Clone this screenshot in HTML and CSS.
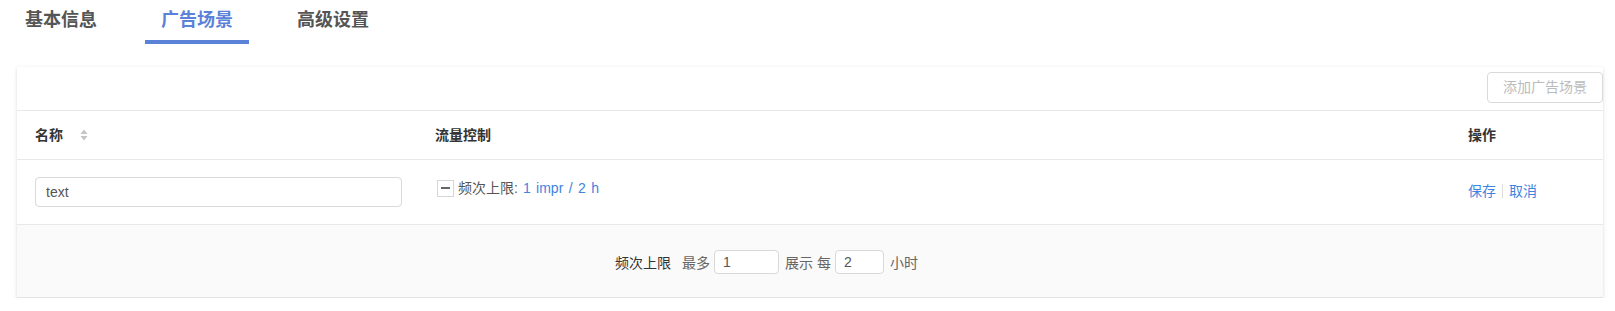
FILE: index.html
```html
<!DOCTYPE html>
<html lang="zh-CN">
<head>
<meta charset="utf-8">
<title>广告场景</title>
<link rel="stylesheet" href="styles.css">
</head>
<body>
  <nav class="tabs">
    <div class="tab">基本信息</div>
    <div class="tab active">广告场景</div>
    <div class="tab">高级设置</div>
  </nav>

  <section class="card">
    <div class="toolbar">
      <button class="btn-add" disabled>添加广告场景</button>
    </div>

    <div class="table">
      <div class="row head">
        <div class="cell c1">名称
          <svg class="sort" width="8" height="14" viewBox="0 0 8 14"><path d="M0.5 6 L4 1.5 L7.5 6 Z" fill="#c4c4c4"/><path d="M0.5 8 L4 12.5 L7.5 8 Z" fill="#c4c4c4"/></svg>
        </div>
        <div class="cell c2">流量控制</div>
        <div class="cell c3">操作</div>
      </div>

      <div class="row body">
        <div class="cell c1"><input class="name-input" type="text" value="text"></div>
        <div class="cell c2">
          <span class="collapse"><span class="dash"></span></span>
          <span class="freq-label">频次上限:</span>
          <span class="link spaced">1 impr / 2 h</span>
        </div>
        <div class="cell c3">
          <span class="link">保存</span><span class="sep"></span><span class="link">取消</span>
        </div>
      </div>

      <div class="expand">
        <span class="exp-label">频次上限</span>
        <span class="muted">最多</span>
        <input class="num w1" type="text" value="1">
        <span class="muted gap-l">展示 每</span>
        <input class="num w2" type="text" value="2">
        <span class="muted gap-l">小时</span>
      </div>
    </div>
  </section>
</body>
</html>
```

FILE: styles.css
```css
html, body {
  margin: 0;
  padding: 0;
  background: #ffffff;
}

body {
  font-family: "Liberation Sans", "Noto Sans CJK SC", sans-serif;
  font-size: 14px;
  color: #333;
}

.tabs {
  display: flex;
  gap: 32px;
  padding-left: 9px;
  height: 44px;
}

.tab {
  padding: 0 16px;
  height: 40px;
  line-height: 40px;
  font-size: 18px;
  font-weight: 600;
  color: #555;
  border-bottom: 4px solid transparent;
}

.tab.active {
  color: #5a82d8;
  border-bottom-color: #5a82d8;
}

.card {
  margin: 23px 12px 0 17px;
  background: #fff;
  box-shadow: 0 1px 3px rgba(0, 0, 0, 0.12), 0 2px 8px rgba(0, 0, 0, 0.04);
}

.toolbar {
  height: 43px;
  display: flex;
  justify-content: flex-end;
  align-items: flex-start;
}

.btn-add {
  margin-top: 5px;
  height: 31px;
  padding: 0 15px;
  border: 1px solid #d9d9d9;
  border-radius: 4px;
  background: #fff;
  color: #bbb;
  font-family: "Liberation Sans", "Noto Sans CJK SC", sans-serif;
  font-size: 14px;
  line-height: 29px;
}

.row {
  display: grid;
  grid-template-columns: 400px 1033px 1fr;
}

.row.head {
  border-top: 1px solid #e8e8e8;
  border-bottom: 1px solid #e8e8e8;
  height: 48px;
  align-items: center;
}

.row.head .cell {
  font-weight: 600;
  color: #333;
  line-height: 20px;
  display: flex;
  align-items: center;
}

.cell {
  padding: 0 18px;
}

.sort {
  margin-left: 17px;
}

.row.body {
  height: 64px;
  border-bottom: 1px solid #e8e8e8;
  align-items: start;
}

.row.body .c1 {
  padding-top: 17px;
}

.name-input {
  box-sizing: border-box;
  width: 367px;
  height: 30px;
  border: 1px solid #d9d9d9;
  border-radius: 4px;
  padding: 0 10px;
  font-family: "Liberation Sans", "Noto Sans CJK SC", sans-serif;
  font-size: 14px;
  color: #555;
  outline: none;
  margin: 0;
}

.row.body .c2 {
  padding-top: 18px;
  display: flex;
  align-items: center;
  line-height: 20px;
  color: #555;
}

.collapse {
  box-sizing: border-box;
  width: 17px;
  height: 17px;
  margin-left: 2px;
  margin-right: 4px;
  border: 1px solid #d6d6d6;
  display: flex;
  align-items: center;
  justify-content: center;
}

.dash {
  width: 9px;
  height: 1.5px;
  background: #666;
}

.freq-label {
  margin-right: 5px;
}

.link {
  color: #3f84e0;
}

.spaced {
  word-spacing: 1.5px;
}

.row.body .c3 {
  padding-top: 20px;
  line-height: 22px;
  display: flex;
  align-items: center;
}

.sep {
  width: 1px;
  height: 14px;
  background: #ddd;
  margin: 0 6px;
}

.expand {
  height: 73px;
  background: #fafafa;
  display: flex;
  align-items: center;
  padding-left: 598px;
  padding-top: 2px;
  box-sizing: border-box;
  border-bottom: 1px solid #e4e4e4;
}

.exp-label {
  color: #333;
  margin-right: 11px;
}

.muted {
  color: #666;
}

.gap-l {
  margin-left: 6px;
}

.num {
  box-sizing: border-box;
  height: 24px;
  border: 1px solid #d9d9d9;
  border-radius: 4px;
  padding: 0 8px;
  background: #fff;
  font-family: "Liberation Sans", "Noto Sans CJK SC", sans-serif;
  font-size: 14px;
  color: #555;
  outline: none;
  margin: 0 0 0 4px;
}

.w1 {
  width: 65px;
}

.w2 {
  width: 49px;
}
```
